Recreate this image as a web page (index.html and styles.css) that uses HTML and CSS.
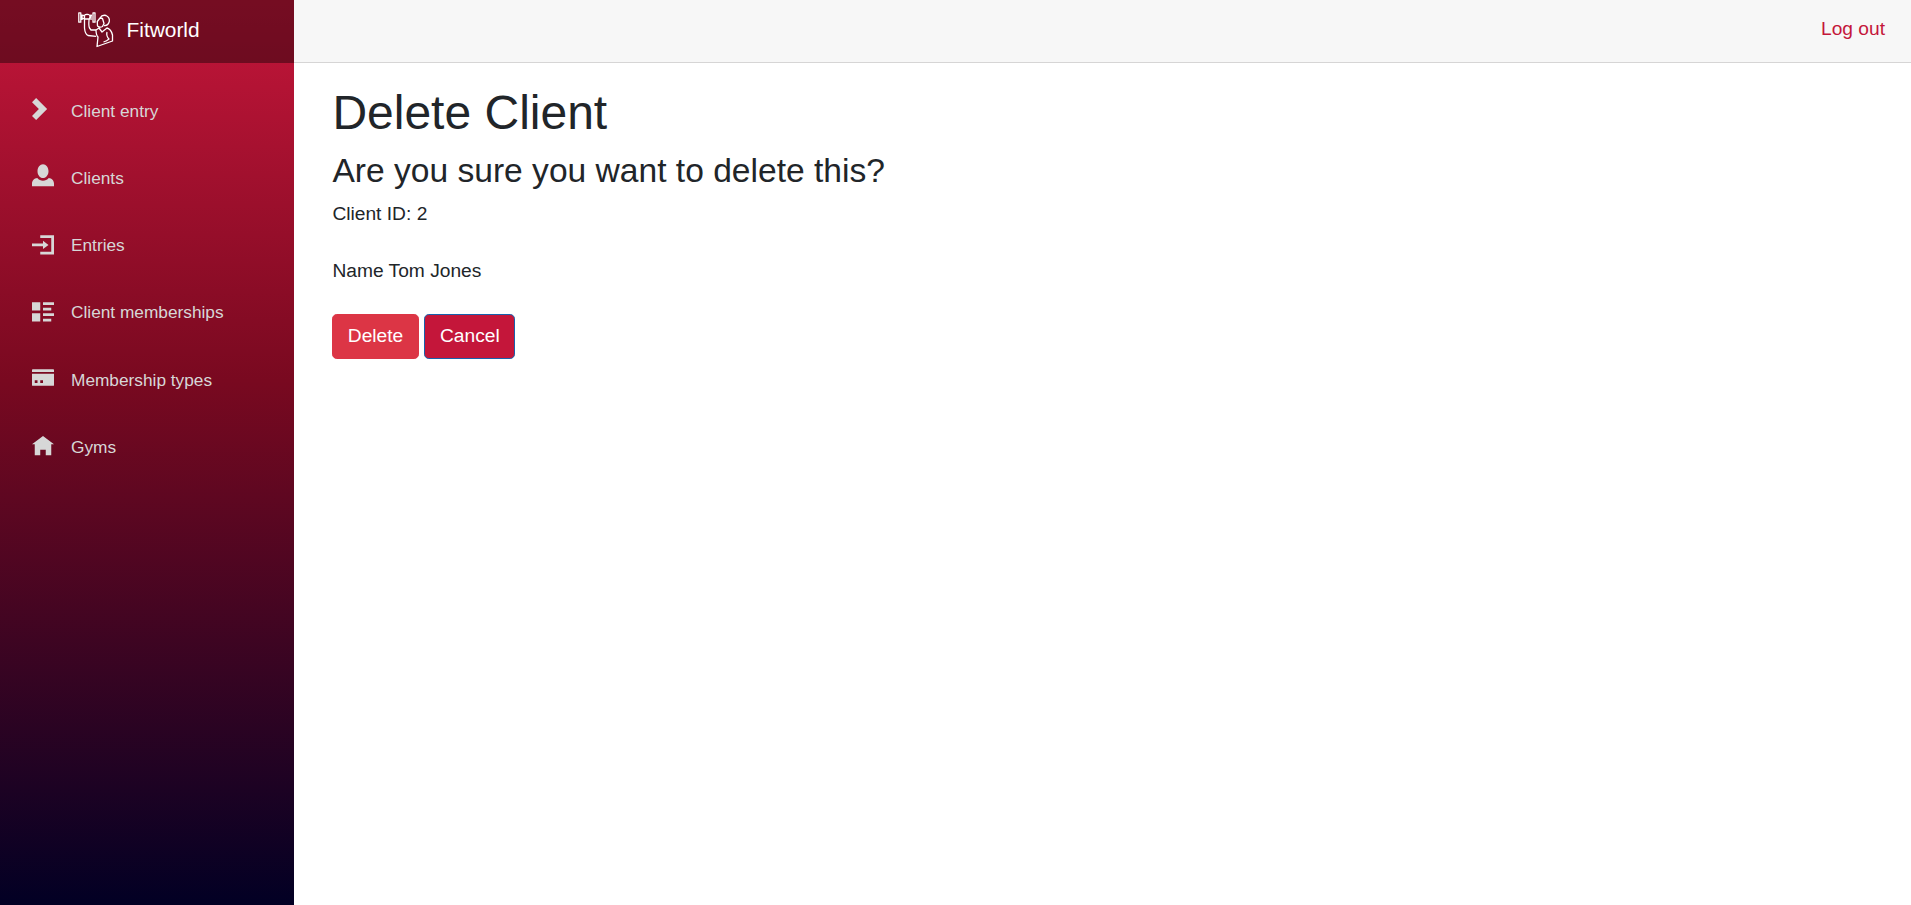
FILE: index.html
```html
<!DOCTYPE html>
<html lang="en">
<head>
<meta charset="utf-8">
<title>Fitworld</title>
<link rel="stylesheet" href="styles.css">
</head>
<body>
<div class="page">
  <aside class="sidebar">
    <div class="brand">
      <svg class="logo" viewBox="0 0 36 36"><path d="M.8.8h2v9.400h-2zM4 2.500v5.500M4 3.500h2.500M4 6.500h3M12 3.500h2M13 2.500v5.500M15 .8h2v9.400h-2zM6.500 4.500Q6.500 2 9 2.500Q12 2 12 5L11 8Q10.500 14 11.500 16L13 18H18M6.500 4.500V16Q7 22 10 23.500L18 24.300M6.500 7H11.500M22 6Q24 2.500 28 3.500Q32 5.500 31.300 9.500Q30 14 26 13.500M22 6L19.300 9.500L19.500 14Q22 16 24.500 14.500L26 11.500L24.500 6.500ZM18 18L21 16L24 20L29 16Q33 17 34.500 23V29L19 34.500L20 25Q18 23 18 18ZM29 20Q28 24 31 27Q29 29 25.500 30"/></svg>
      <span>Fitworld</span>
    </div>
    <nav class="menu">
      <a class="item"><svg class="icon" viewBox="0 0 8 8"><path d="M1.5 0L0 1.5 2.5 4 0 6.5 1.5 8l4-4z"/></svg>Client entry</a>
      <a class="item"><svg class="icon" viewBox="0 .25 8 8"><path d="M4 0C2.9 0 2 1.12 2 2.5S2.9 5 4 5s2-1.12 2-2.5S5.1 0 4 0zM1.91 5C.85 5.05 0 5.92 0 7v1h8V7c0-1.08-.84-1.95-1.91-2C5.54 5.61 4.8 6 4 6s-1.540-.39-2.09-1z"/></svg>Clients</a>
      <a class="item"><svg class="icon" viewBox="0 -.85 8 8"><path d="M3 0v1h4v5H3v1h5V0zM4 2v1H0v1h4v1l2-1.5z"/></svg>Entries</a>
      <a class="item"><svg class="icon" viewBox="0 -.85 8 8"><path d="M0 0v3h3V0zM4 0v1h4V0zM4 2v1h3V2zM0 4v3h3V4zM4 4v1h4V4zM4 6v1h3V6z"/></svg>Client memberships</a>
      <a class="item"><svg class="icon" viewBox="0 -.85 8 8"><path d="M.25 0C.11 0 0 .11 0 .25V1h8V.25C8 .11 7.890 0 7.750 0zM0 1.600v4.150c0 .14.11.25.25.25h7.500c.14 0 .25-.11.25-.25V1.600zM1 4h1v1H1zM3 4h1v1H3z"/></svg>Membership types</a>
      <a class="item"><svg class="icon" viewBox="0 -.7 8 8"><path d="M4 0L0 3h1v4h2V5h2v2h2V3.030l1-.03z"/></svg>Gyms</a>
    </nav>
  </aside>
  <main class="main">
    <header class="topbar"><a class="logout">Log out</a></header>
    <article class="content">
      <h1 class="title">Delete Client</h1>
      <h3 class="question">Are you sure you want to delete this?</h3>
      <p class="field">Client ID: 2</p>
      <p class="field">Name Tom Jones</p>
      <div class="actions"><button class="btn btn-danger">Delete</button><button class="btn btn-primary">Cancel</button></div>
    </article>
  </main>
</div>
</body>
</html>
```

FILE: styles.css
```css
* { box-sizing: border-box; }
body {
  margin: 0;
  font: 19.2px/28.8px "Liberation Sans", Arial, sans-serif;
  color: #212529;
  background: #fff;
}
.page { display: flex; height: 905px; overflow: hidden; }
.sidebar {
  width: 294px;
  flex: none;
  background: linear-gradient(0deg, #020024 0%, #790920 58%, #c4163a 100%);
}
.brand {
  height: 63px;
  padding: 0 0 3px 78px;
  display: flex;
  align-items: center;
  gap: 12.5px;
  font-size: 20.9px;
  color: #fff;
  background: rgba(0, 0, 0, .4);
}
.logo {
  width: 36px;
  height: 36px;
  fill: none;
  stroke: #fff;
  stroke-width: 1.3;
  stroke-linejoin: round;
}
.menu { padding-top: 19.4px; }
.item {
  display: flex;
  align-items: center;
  height: 57.6px;
  margin-bottom: 9.6px;
  padding-left: 32px;
  font-size: 17.28px;
  color: #d7d7d7;
}
.icon {
  width: 22px;
  height: 22px;
  margin: -4px 17px 0 0;
  fill: #d7d7d7;
  overflow: visible;
}
.main { flex: 1; }
.topbar {
  height: 63px;
  padding: 0 26px 4px 0;
  display: flex;
  justify-content: flex-end;
  align-items: center;
  background: #f7f7f7;
  border-bottom: 1px solid #d6d5d5;
}
.logout { color: #c4163a; }
.content { padding: 20.6px 38.4px; }
.title {
  margin: 0 0 9.6px;
  font-size: 48px;
  line-height: 57.6px;
  font-weight: 400;
}
.question {
  margin: 0 0 8.6px;
  font-size: 33.6px;
  line-height: 40.3px;
  font-weight: 400;
}
.field { margin: 0 0 28.2px; }
.actions { display: flex; gap: 5.3px; }
.btn {
  height: 45px;
  padding: 0 14.4px;
  border: 1px solid;
  border-radius: 4.8px;
  font: inherit;
  color: #fff;
}
.btn-danger { background: #dc3545; border-color: #dc3545; }
.btn-primary { padding: 0 14.8px 0 15px; background: #c4163a; border-color: #1861ac; }
```
